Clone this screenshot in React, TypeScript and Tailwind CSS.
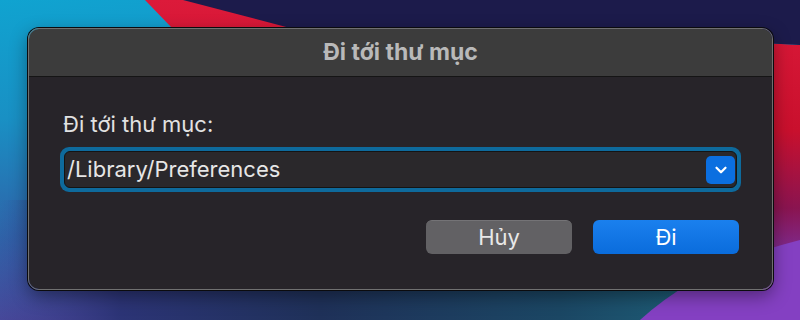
import { ChevronDown } from 'lucide-react'

function Wallpaper() {
  return (
    <svg className="absolute inset-0 h-full w-full" viewBox="0 0 800 320" preserveAspectRatio="none">
      <defs>
        <linearGradient id="base" x1="0" y1="0" x2="0.25" y2="1">
          <stop offset="0" stopColor="#10a3d0" />
          <stop offset="0.35" stopColor="#1990c4" />
          <stop offset="0.7" stopColor="#2f62a8" />
          <stop offset="1" stopColor="#4c4196" />
        </linearGradient>
        <linearGradient id="bottom" x1="0" y1="0" x2="1" y2="0">
          <stop offset="0" stopColor="#3a3c88" stopOpacity="0" />
          <stop offset="0.15" stopColor="#2c3476" />
          <stop offset="0.4" stopColor="#1f3159" />
          <stop offset="0.7" stopColor="#1b4764" />
          <stop offset="0.85" stopColor="#1d5a74" />
          <stop offset="1" stopColor="#1d5a74" />
        </linearGradient>
        <linearGradient id="red" x1="0" y1="0" x2="0" y2="1">
          <stop offset="0" stopColor="#dc1a3a" />
          <stop offset="0.5" stopColor="#c9102d" />
          <stop offset="0.8" stopColor="#8a1450" />
          <stop offset="1" stopColor="#7c2f9a" />
        </linearGradient>
      </defs>
      <rect width="800" height="320" fill="url(#base)" />
      <rect x="0" y="200" width="800" height="120" fill="url(#bottom)" />
      <path d="M145 0 L183 0 Q 500 30 800 45 L800 260 Q 400 200 172 28 Z" fill="url(#red)" />
      <path d="M183 0 L800 0 L800 45 Q 520 32 290 28 Z" fill="#1c1b4b" />
      <path d="M640 320 Q 700 265 800 240 L800 320 Z" fill="#8440c2" />
    </svg>
  )
}

export default function App() {
  return (
    <div className="relative h-[320px] w-[800px] overflow-hidden font-['Inter','Liberation_Sans',sans-serif]">
      <Wallpaper />
      <div className="relative pl-[28px] pt-[28px]">
        <div className="flex h-[262px] w-[745px] flex-col overflow-hidden rounded-[11px] border border-[#707070] shadow-[0_0_0_1px_#0b0b0e,0_6px_18px_rgba(0,0,0,0.4)]">
          <div className="flex h-[48px] items-center justify-center border-b border-[#151515] bg-[#3c3c3c]">
            <span className="text-[23px] font-bold text-[#b9b9b9]">Đi tới thư mục</span>
          </div>
          <div className="flex flex-1 flex-col bg-[#272429] px-[31px] pt-[34px]">
            <div className="h-[26px] pl-[3px] text-[22px] leading-[26px] text-[#e2e2e2]">Đi tới thư mục:</div>
            <div className="mt-[10px] rounded-[9px] bg-[#0e6a9c] p-[4px]">
              <div className="flex h-[37px] items-center rounded-[6px] border border-[#141414] bg-[#2a282b] pl-[2px] pr-[1px]">
                <span className="flex-1 text-[22px] text-[#e6e6e6]">/Library/Preferences</span>
                <div className="flex h-[28px] w-[29px] items-center justify-center rounded-[5px] bg-[#0b6fe0]">
                  <ChevronDown className="h-[18px] w-[18px] text-white" strokeWidth={3} />
                </div>
              </div>
            </div>
            <div className="mt-[28px] flex justify-end gap-[21px] pr-[2px]">
              <button className="h-[34px] w-[146px] rounded-[6px] border-t border-[#747376] bg-[#626164] text-[22px] text-[#e8e8e8]">
                Hủy
              </button>
              <button className="h-[34px] w-[146px] rounded-[6px] bg-gradient-to-b from-[#1a80ee] to-[#0a6cdc] text-[22px] text-white">
                Đi
              </button>
            </div>
          </div>
        </div>
      </div>
    </div>
  )
}
